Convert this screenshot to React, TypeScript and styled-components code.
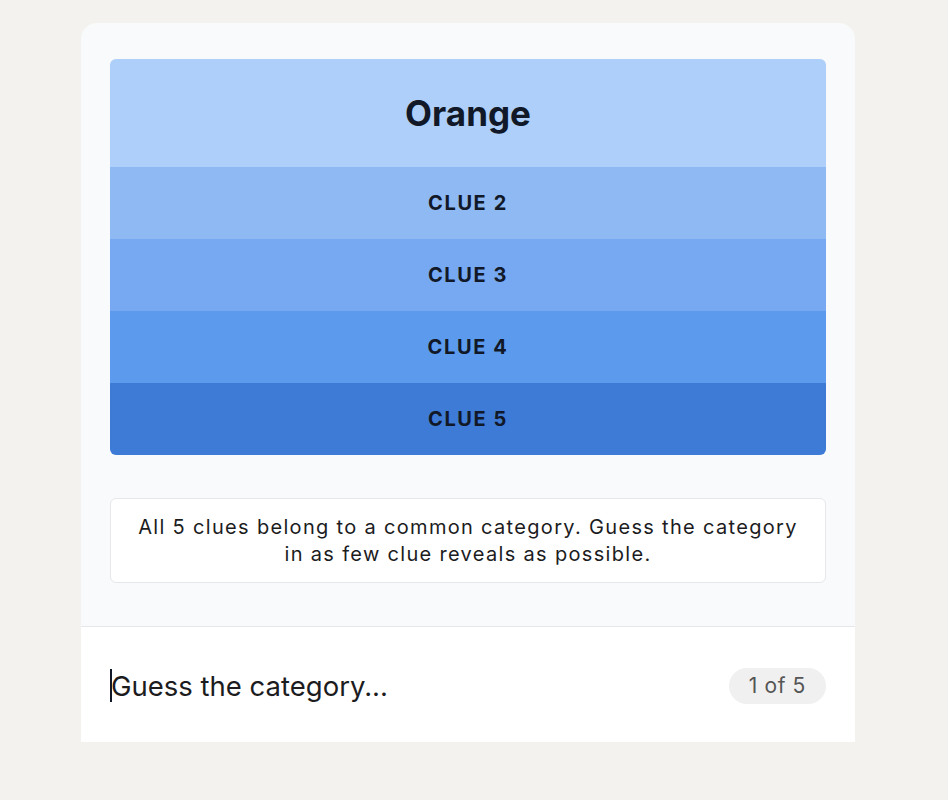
import styled, { createGlobalStyle } from 'styled-components';

const GlobalStyle = createGlobalStyle`
  html, body {
    margin: 0;
    padding: 0;
    background: #f3f2ee;
    font-family: Inter, "Noto Sans", sans-serif;
    color: #111827;
  }
`;

const Page = styled.div`
  padding: 23px 0 0 81px;
  min-height: 800px;
  box-sizing: border-box;
`;

const Card = styled.div`
  width: 774px;
  background: #f8fafc;
  border-radius: 16px 16px 0 0;
  overflow: hidden;
`;

const Board = styled.div`
  padding: 36px 29px 43px;
  display: flex;
  flex-direction: column;
  gap: 43px;
`;

const ClueStack = styled.div`
  display: flex;
  flex-direction: column;
  border-radius: 6px;
  overflow: hidden;
`;

const ClueRow = styled.div<{ $bg: string; $revealed?: boolean }>`
  background: ${(p) => p.$bg};
  height: ${(p) => (p.$revealed ? 108 : 72)}px;
  display: flex;
  align-items: center;
  justify-content: center;
  color: #111827;
  font-weight: 700;
  font-size: ${(p) => (p.$revealed ? '35px' : '20px')};
  letter-spacing: ${(p) => (p.$revealed ? '0' : '0.08em')};
  text-transform: ${(p) => (p.$revealed ? 'none' : 'uppercase')};
`;

const Info = styled.div`
  background: #ffffff;
  border: 1px solid #e5e7eb;
  border-radius: 6px;
  padding: 15px 24px 14px;
  text-align: center;
  font-size: 20px;
  line-height: 27px;
  letter-spacing: 0.066em;
  color: #1c1c1e;
`;

const InputBar = styled.div`
  background: #ffffff;
  border-top: 1px solid #e5e7eb;
  height: 116px;
  box-sizing: border-box;
  padding: 2px 29px 0;
  display: flex;
  align-items: center;
  gap: 16px;
`;

const GuessInput = styled.input`
  flex: 1;
  border: none;
  outline: none;
  background: transparent;
  font-family: inherit;
  font-size: 27.5px;
  color: #111827;
  padding: 0;
  caret-color: #111827;
  &::placeholder {
    color: #1c1c1e;
  }
`;

const Caret = styled.span`
  width: 2px;
  height: 33px;
  background: #111827;
  margin-right: -17px;
  flex-shrink: 0;
`;

const Counter = styled.span`
  background: #f0f0f0;
  color: #555555;
  border-radius: 18px;
  height: 36px;
  padding: 0 20px;
  display: flex;
  align-items: center;
  font-size: 21px;
  letter-spacing: 0.03em;
  white-space: nowrap;
`;

const clues = [
  { label: 'Orange', bg: '#aecff9', revealed: true },
  { label: 'Clue 2', bg: '#8fb9f3' },
  { label: 'Clue 3', bg: '#77a8f2' },
  { label: 'Clue 4', bg: '#5b9aec' },
  { label: 'Clue 5', bg: '#3e7bd6' },
];

export default function App() {
  return (
    <>
      <GlobalStyle />
      <Page>
        <Card>
          <Board>
            <ClueStack>
              {clues.map((c) => (
                <ClueRow key={c.label} $bg={c.bg} $revealed={c.revealed}>
                  {c.label}
                </ClueRow>
              ))}
            </ClueStack>
            <Info>
              All 5 clues belong to a common category. Guess the category in as few clue reveals as
              possible.
            </Info>
          </Board>
          <InputBar>
            <Caret />
            <GuessInput placeholder="Guess the category..." />
            <Counter>1 of 5</Counter>
          </InputBar>
        </Card>
      </Page>
    </>
  );
}
